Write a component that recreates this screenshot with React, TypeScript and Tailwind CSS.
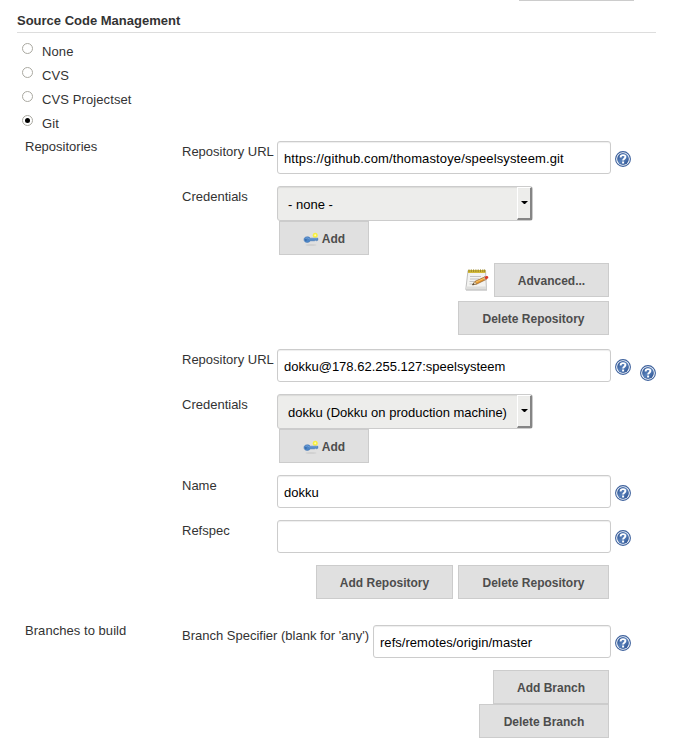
import React from "react";

function HelpIcon({ className = "" }: { className?: string }) {
  return (
    <svg className={"size-4 shrink-0 " + className} viewBox="0 0 16 16">
      <defs>
        <linearGradient id="help" x1="0" y1="0" x2="1" y2="1">
          <stop offset="0" stopColor="#234a8c" />
          <stop offset="0.5" stopColor="#5a82bb" />
          <stop offset="1" stopColor="#24498a" />
        </linearGradient>
      </defs>
      <circle cx="8" cy="8" r="7.4" fill="#fff" stroke="#3c609c" strokeWidth="1.1" />
      <circle cx="8" cy="8" r="5.9" fill="url(#help)" />
      <path d="M5.6 6.4C5.6 3.4 10.4 3.4 10.4 6.1C10.4 7.7 8.1 7.7 8.1 9.6" fill="none" stroke="#fff" strokeWidth="1.9" />
      <rect x="7.1" y="10.5" width="2" height="2" fill="#fff" />
    </svg>
  );
}

function KeyIcon() {
  return (
    <svg className="h-4 w-4 shrink-0" viewBox="0 0 16 16">
      <ellipse cx="8" cy="14" rx="5.5" ry="0.8" fill="#cbcbcb" />
      <circle cx="12.2" cy="4.2" r="2.5" fill="#f8ef42" />
      <circle cx="12.2" cy="4.2" r="1" fill="#fffbb0" />
      <path d="M1 8.6C1 5.3 5.7 5 7.4 7.2H14.8V9.2L13.8 9.8L12.6 9.3L11.4 9.8H7.4C6 12.4 1 12 1 8.6Z" fill="#4c85c6" stroke="#3c70b0" strokeWidth="0.5" />
      <path d="M2.6 7.3Q4.6 6.1 6.4 7.9H14" fill="none" stroke="#80abdf" strokeWidth="0.7" />
      <circle cx="2.9" cy="9" r="0.7" fill="#2b5890" />
    </svg>
  );
}

function NotepadIcon() {
  return (
    <svg className="mr-[5px] h-6 w-6 shrink-0" viewBox="0 0 24 24">
      <path d="M1 21.5H22V22.7H1Z" fill="#c4c4c4" />
      <path d="M3 2.5H20.5L21.5 21.5H.8Z" fill="#f3f3f1" stroke="#b0b0b0" strokeWidth="0.8" />
      <path d="M1.2 18.5H21.3L21.5 21.5H.8Z" fill="#dededc" />
      <path d="M3 2H20.5V5H3Z" fill="#d2b93a" />
      <path d="M4 1.4V4M6.3 1.4V4M8.6 1.4V4M10.9 1.4V4M13.2 1.4V4M15.5 1.4V4M17.8 1.4V4M19.6 1.4V4" stroke="#968322" strokeWidth="0.9" />
      <path d="M5 8.5H16M5 11H14M4.5 13.5H9M4.5 16H8" stroke="#c3c3c3" strokeWidth="1" />
      <path d="M7.5 16.8L10 13.4L20 8.8L21.4 11.3L11.7 16.1Z" fill="#e9992f" stroke="#8f581b" strokeWidth="0.7" />
      <path d="M10.6 14.2L20.3 9.7" stroke="#fbd078" strokeWidth="0.8" />
      <path d="M7.4 16.9L10 13.4L11.7 16.1Z" fill="#ead6b3" stroke="#765a35" strokeWidth="0.4" />
      <path d="M7.2 17L8.7 15.2L9.5 16.5Z" fill="#333" />
      <path d="M19.3 9.1L21.5 8.1C23 7.5 24 9.8 22.7 10.6L20.7 11.6Z" fill="#dc3826" />
      <path d="M18.5 9.5L19.3 9.1L20.7 11.6L19.9 12Z" fill="#bbb" />
    </svg>
  );
}

function Button({ width, icon, children }: { width: string; icon?: React.ReactNode; children: React.ReactNode }) {
  return (
    <button className={"flex h-[34px] shrink-0 items-center justify-center gap-[3px] whitespace-nowrap border border-[#ccc] bg-[#e0e0e0] pt-px text-[12px] font-bold text-[#4d4d4d] " + width}>
      {icon}
      <span>{children}</span>
    </button>
  );
}

function Row({ label, labelWidth = "w-[95px]", className = "", children }: { label: string; labelWidth?: string; className?: string; children: React.ReactNode }) {
  return (
    <div className={"flex items-start pl-[182px] " + className}>
      <label className={"shrink-0 whitespace-nowrap pt-[3px] leading-4 " + labelWidth}>{label}</label>
      {children}
    </div>
  );
}

function Field({ value, width = "w-[334px]", tracking = "tracking-normal" }: { value: string; width?: string; tracking?: string }) {
  return (
    <>
      <div className={"flex h-[33px] shrink-0 items-center whitespace-nowrap rounded-[3px] border border-[#ccc] bg-white px-1.5 pt-0.5 text-black shadow-[inset_0_1px_1px_rgba(0,0,0,0.07)] " + width + " " + tracking}>{value}</div>
      <HelpIcon className="ml-1 mt-[10px]" />
    </>
  );
}

function Credentials({ value }: { value: string }) {
  return (
    <Row label="Credentials" className="mt-3">
      <div>
        <div className="flex h-[35px] w-[256px] justify-between rounded-[3px] border border-[#ccc] bg-[#ededeb] text-black shadow-[inset_0_1px_1px_rgba(0,0,0,0.08)]">
          <span className="whitespace-nowrap pl-[10px] pt-[10px] leading-4">{value}</span>
          <span className="flex w-[15px] items-center justify-center border-b-2 border-l border-r-2 border-t border-b-[#858585] border-l-white border-r-[#858585] border-t-white">
            <svg className="mb-0.5 h-[3px] w-[7px]" viewBox="0 0 7 3"><path d="M0 0H7L4 3H3Z" fill="#000" /></svg>
          </span>
        </div>
        <div className="pl-0.5"><Button width="w-[90px]" icon={<KeyIcon />}>Add</Button></div>
      </div>
    </Row>
  );
}

const options = ["None", "CVS", "CVS Projectset", "Git"];

export default function App() {
  return (
    <main className="h-[751px] w-[681px] overflow-hidden bg-white font-['Liberation_Sans',Arial,sans-serif] text-[13px] text-[#333]">
      <div className="ml-[519px] h-px w-[115px] bg-[#ccc]" />
      <h2 className="ml-[17px] h-8 w-[639px] border-b border-[#ddd] pt-[12px] font-bold leading-4">Source Code Management</h2>
      <div className="pl-[22px] pt-[6px]">
        {options.map((option) => (
          <label key={option} className="flex h-6 items-start">
            <span className="mt-1 flex size-[11px] items-center justify-center rounded-full border border-[#aaa9a1]">
              {option === "Git" && <span className="size-[5px] rounded-full bg-black" />}
            </span>
            <span className="pl-[9px] pt-[5px] leading-4 tracking-[0.1px]">{option}</span>
          </label>
        ))}
      </div>
      <div className="-mb-[11px] mt-1 h-4 pl-[25px] leading-4">Repositories</div>
      <div className="pt-px">
        <Row label="Repository URL" className="-mt-[4px]"><Field value="https://github.com/thomastoye/speelsysteem.git" tracking="tracking-[0.13px]" /></Row>
        <Credentials value="- none -" />
        <div className="mt-2 flex w-[609px] items-center justify-end"><NotepadIcon /><Button width="w-[115px]">Advanced...</Button></div>
        <div className="mt-1 flex w-[609px] justify-end"><Button width="w-[151px]">Delete Repository</Button></div>
        <Row label="Repository URL" className="mt-[14px]">
          <Field value="dokku@178.62.255.127:speelsysteem" />
          <HelpIcon className="ml-[9px] mt-4" />
        </Row>
        <Credentials value="dokku (Dokku on production machine)" />
        <Row label="Name" className="mt-3"><Field value="dokku" /></Row>
        <Row label="Refspec" className="mt-3"><Field value="" /></Row>
        <div className="mt-3 flex w-[609px] justify-end gap-[5px]"><Button width="w-[137px]">Add Repository</Button><Button width="w-[151px]">Delete Repository</Button></div>
      </div>
      <div className="mt-6 flex items-start pl-[25px]">
        <span className="w-[157px] shrink-0 leading-4 tracking-[0.05px]">Branches to build</span>
        <div className="flex items-start pt-0.5">
          <label className="w-[191px] shrink-0 whitespace-nowrap pt-[3px] leading-4">Branch Specifier (blank for 'any')</label>
          <Field value="refs/remotes/origin/master" width="w-[238px]" tracking="tracking-[0.04px]" />
        </div>
      </div>
      <div className="mt-3 flex w-[609px] flex-col items-end"><Button width="w-[116px]">Add Branch</Button><Button width="w-[130px]">Delete Branch</Button></div>
    </main>
  );
}
